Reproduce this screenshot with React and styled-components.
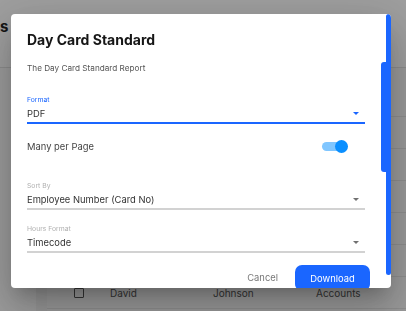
import styled, { createGlobalStyle } from "styled-components";

const GlobalStyle = createGlobalStyle`
  html, body {
    margin: 0;
    padding: 0;
    width: 406px;
    height: 311px;
    overflow: hidden;
    font-family: Inter, "Noto Sans", sans-serif;
  }
`;

// rows above the last one sit under the dialog, so only their lines show
const rows = [null, null, null, null, null, { first: "David", last: "Johnson", dept: "Accounts" }];

const fields = [
  { label: "Sort By", value: "Employee Number (Card No)", top: 23 },
  { label: "Hours Format", value: "Timecode", top: 14 },
];

export default function App() {
  return (
    <>
      <GlobalStyle />
      <Page>
        <Header>
          <Heading>s</Heading>
        </Header>
        <Body>
          <Sidebar />
          <Gutter />
          <Table>
            <Spacer />
            {rows.map((r, i) => (
              <Row key={i}>
                {r && (
                  <>
                    <Check />
                    <Cell $w={103}>{r.first}</Cell>
                    <Cell $w={103}>{r.last}</Cell>
                    <Cell $w={90}>{r.dept}</Cell>
                  </>
                )}
              </Row>
            ))}
          </Table>
        </Body>
      </Page>

      <Backdrop>
        <Dialog>
          <Title>Day Card Standard</Title>
          <Subtitle>The Day Card Standard Report</Subtitle>

          <Field $top={21} $active>
            <Label $active>Format</Label>
            <Value>
              PDF
              <Arrow $active />
            </Value>
          </Field>

          <ToggleRow>
            <span>Many per Page</span>
            <Switch>
              <Track />
              <Thumb />
            </Switch>
          </ToggleRow>

          {fields.map((f) => (
            <Field key={f.label} $top={f.top}>
              <Label>{f.label}</Label>
              <Value>
                {f.value}
                <Arrow />
              </Value>
            </Field>
          ))}

          <Actions>
            <TextButton>Cancel</TextButton>
            <PrimaryButton>Download</PrimaryButton>
          </Actions>

          <OuterThumb />
          <InnerThumb />
        </Dialog>
      </Backdrop>
    </>
  );
}

const Page = styled.div`
  width: 406px;
  height: 311px;
  overflow: hidden;
  background: #ffffff;
  display: flex;
  flex-direction: column;
`;

const Header = styled.div`
  height: 68px;
  flex-shrink: 0;
  border-bottom: 1px solid #e2e2e2;
  display: flex;
  align-items: flex-start;
  padding-top: 18px;
  box-sizing: border-box;
`;

const Heading = styled.div`
  font-size: 15px;
  font-weight: 700;
  line-height: 18px;
  color: #222;
`;

const Body = styled.div`
  flex: 1;
  display: flex;
`;

const Sidebar = styled.div`
  width: 36px;
  background: #fcfcfc;
`;

const Gutter = styled.div`
  width: 11px;
  background: #f2f2f2;
`;

const Table = styled.div`
  flex: 1;
  display: flex;
  flex-direction: column;
  background: #f8f8f8;
`;

const Spacer = styled.div`
  height: 49px;
  flex-shrink: 0;
  border-bottom: 1px solid #e4e4e4;
  box-sizing: border-box;
`;

const Row = styled.div`
  height: 32px;
  flex-shrink: 0;
  display: flex;
  align-items: center;
  padding-left: 27px;
  border-bottom: 1px solid #e4e4e4;
  box-sizing: border-box;
  font-size: 10px;
  color: #555;
`;

const Check = styled.div`
  width: 8px;
  height: 8px;
  border: 1.5px solid #555;
  border-radius: 1px;
  margin-right: 26px;
`;

const Cell = styled.div`
  width: ${(p) => p.$w}px;
  flex-shrink: 0;
`;

const Backdrop = styled.div`
  position: fixed;
  inset: 0;
  background: rgba(0, 0, 0, 0.38);
`;

const Dialog = styled.div`
  position: absolute;
  left: 11px;
  top: 14px;
  width: 380px;
  height: 274px;
  box-sizing: border-box;
  padding: 16px 26px 0 16px;
  background: #fff;
  border-radius: 4px;
  overflow: hidden;
  box-shadow: 0 11px 15px -7px rgba(0, 0, 0, 0.2), 0 24px 38px 3px rgba(0, 0, 0, 0.14),
    0 9px 46px 8px rgba(0, 0, 0, 0.12);
  display: flex;
  flex-direction: column;
`;

const Title = styled.h2`
  margin: 0;
  font-size: 14px;
  line-height: 20px;
  font-weight: 700;
  color: #161616;
`;

const Subtitle = styled.p`
  margin: 12px 0 0;
  font-size: 8.2px;
  line-height: 12px;
  color: #555;
`;

const Field = styled.div`
  flex-shrink: 0;
  margin-top: ${(p) => p.$top}px;
  border-bottom: 2px solid ${(p) => (p.$active ? "#1a66ff" : "#d2d2d2")};
`;

const Label = styled.div`
  font-size: 6.8px;
  line-height: 10px;
  color: ${(p) => (p.$active ? "#1a66ff" : "#b0b0b0")};
`;

const Value = styled.div`
  height: 17px;
  display: flex;
  align-items: center;
  justify-content: space-between;
  font-size: 9.4px;
  color: #333;
`;

const Arrow = styled.span`
  width: 0;
  height: 0;
  margin-right: 6px;
  border-left: 3.5px solid transparent;
  border-right: 3.5px solid transparent;
  border-top: 3.5px solid ${(p) => (p.$active ? "#1a66ff" : "#707070")};
`;

const ToggleRow = styled.div`
  flex-shrink: 0;
  height: 24px;
  margin-top: 10px;
  display: flex;
  align-items: center;
  justify-content: space-between;
  font-size: 9.4px;
  color: #444;
`;

const Switch = styled.div`
  position: relative;
  width: 26px;
  height: 13px;
  margin-right: 17px;
`;

const Track = styled.div`
  position: absolute;
  left: 0;
  top: 2px;
  width: 24px;
  height: 9px;
  border-radius: 5px;
  background: #80c6ff;
`;

const Thumb = styled.div`
  position: absolute;
  right: 0;
  top: 0;
  width: 13px;
  height: 13px;
  border-radius: 50%;
  background: #0a8fff;
`;

const Actions = styled.div`
  flex-shrink: 0;
  margin-top: 12px;
  display: flex;
  justify-content: flex-end;
  align-items: center;
  gap: 17px;
  margin-right: -5px;
`;

const TextButton = styled.span`
  font-size: 9.4px;
  color: #777;
  line-height: 26px;
`;

const PrimaryButton = styled.span`
  width: 75px;
  height: 26px;
  display: flex;
  align-items: center;
  justify-content: center;
  background: #1a66ff;
  border-radius: 7px;
  color: #fff;
  font-size: 9.4px;
`;

const OuterThumb = styled.div`
  position: absolute;
  right: 0;
  top: 0;
  width: 5px;
  height: 261px;
  border-radius: 3px;
  background: #1a66ff;
`;

const InnerThumb = styled.div`
  position: absolute;
  right: 5px;
  top: 48px;
  width: 5px;
  height: 110px;
  border-radius: 3px 0 0 3px;
  background: #1a66ff;
`;
